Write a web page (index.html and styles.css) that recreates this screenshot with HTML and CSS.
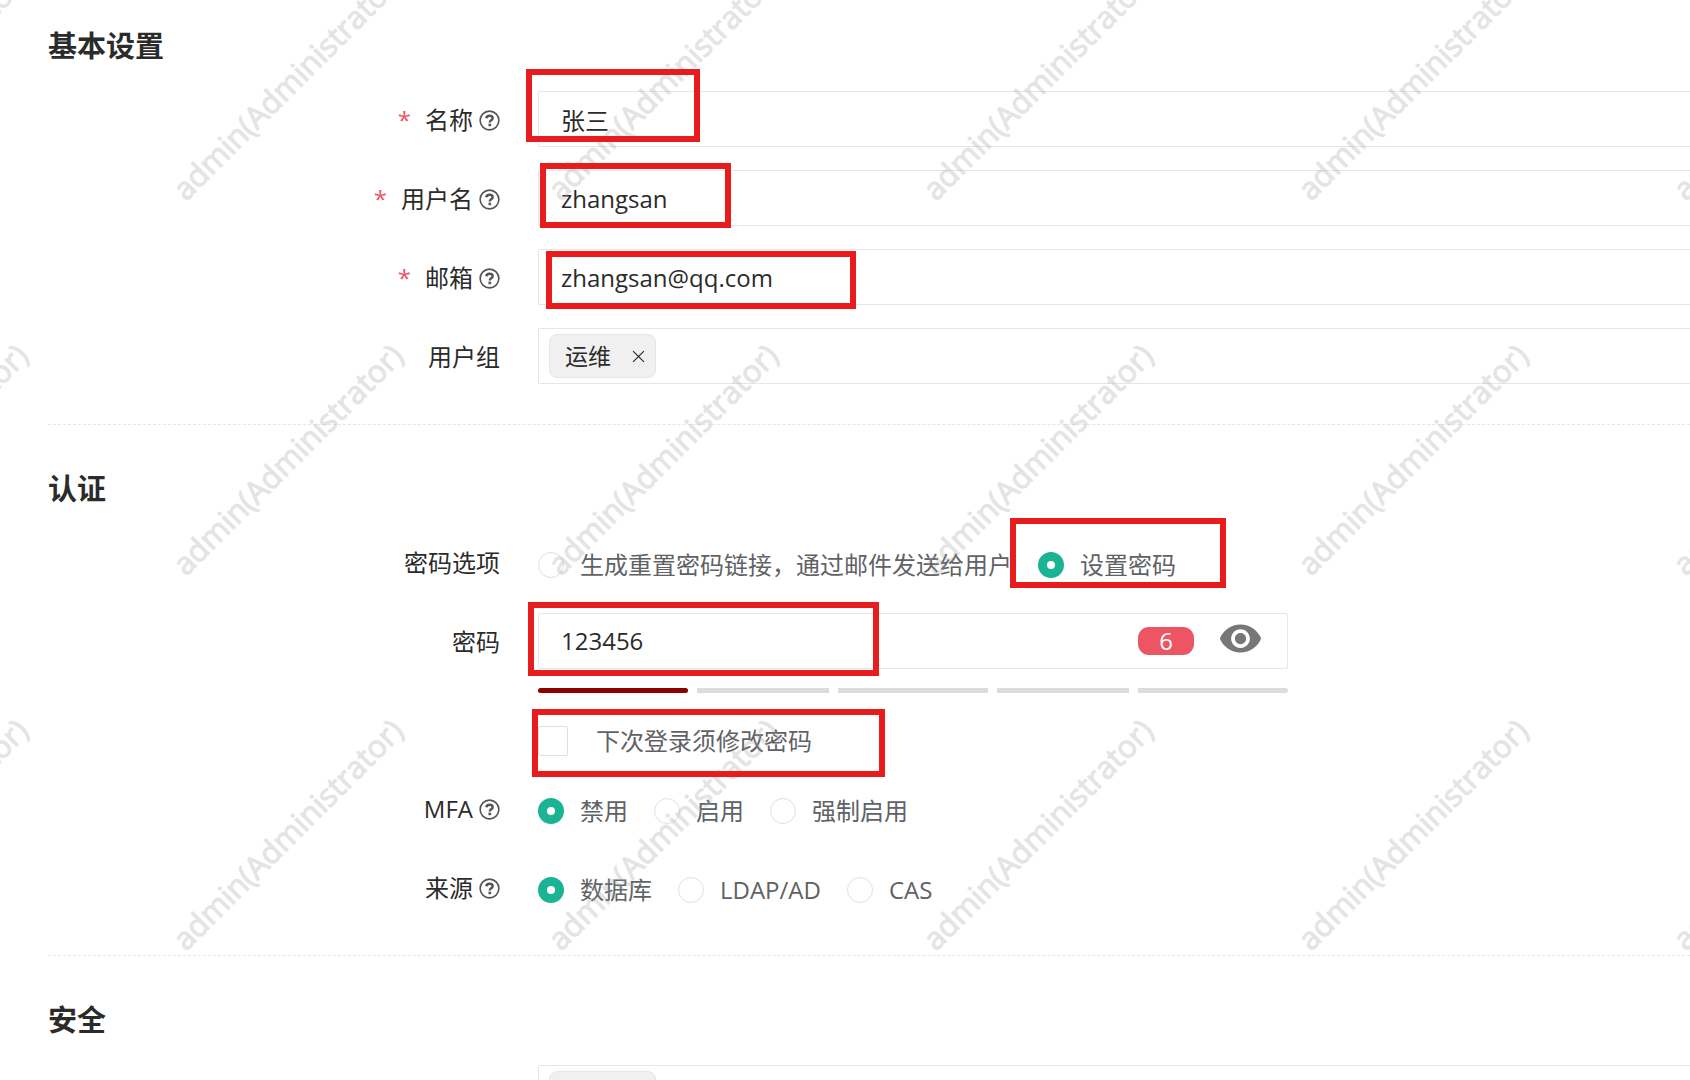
FILE: index.html
```
<!DOCTYPE html>
<html lang="zh-CN">
<head>
  <meta charset="UTF-8">
  <meta name="viewport" content="width=device-width, initial-scale=1">
  <title>基本设置</title>
  <link rel="stylesheet" href="styles.css">
</head>

<body>
  <svg class="sprite" aria-hidden="true">
    <symbol id="icon-help" viewBox="0 0 22 22">
      <circle cx="11" cy="11" r="9.8" fill="none" stroke="currentColor" stroke-width="1.7"/>
      <path d="M7.6 8.7c.3-1.8 1.5-2.7 3.4-2.7 2 0 3.3 1 3.3 2.6 0 2.2-3 2.3-3 4.4" fill="none" stroke="currentColor" stroke-width="2.6"/>
      <rect x="9.9" y="14.3" width="2.8" height="2.7" fill="currentColor"/>
    </symbol>
  </svg>

  <form class="form">
    <section class="section">
      <h3>基本设置</h3>
      <div class="row">
        <label class="name" for="name"><span class="required">*</span>名称<svg class="help"><use href="#icon-help"/></svg></label>
        <input class="control" type="text" id="name" value="张三">
      </div>
      <div class="row">
        <label class="name" for="username"><span class="required">*</span>用户名<svg class="help"><use href="#icon-help"/></svg></label>
        <input class="control" type="text" id="username" value="zhangsan">
      </div>
      <div class="row">
        <label class="name" for="email"><span class="required">*</span>邮箱<svg class="help"><use href="#icon-help"/></svg></label>
        <input class="control" type="text" id="email" value="zhangsan@qq.com">
      </div>
      <div class="row">
        <div class="name">用户组</div>
        <div class="control tags">
          <span class="tag">运维
            <button type="button" class="remove"><svg viewBox="0 0 12 12"><path d="M1 1l10 10M11 1L1 11" fill="none" stroke="currentColor" stroke-width="1.1"/></svg></button>
          </span>
        </div>
      </div>
    </section>

    <section class="section">
      <h3>认证</h3>
      <div class="row">
        <div class="name">密码选项</div>
        <div class="options">
          <label><input type="radio" name="strategy">生成重置密码链接，通过邮件发送给用户</label>
          <label><input type="radio" name="strategy" checked>设置密码</label>
        </div>
      </div>
      <div class="row">
        <label class="name" for="password">密码</label>
        <div class="password">
          <div class="password-box">
            <input type="text" id="password" value="123456">
            <span class="count">6</span>
            <button type="button" class="eye"><svg viewBox="0 0 24 24"><path fill="currentColor" d="M12 4.5C7 4.5 2.73 7.61 1 12c1.73 4.39 6 7.5 11 7.5s9.27-3.11 11-7.5c-1.73-4.39-6-7.5-11-7.5zM12 17c-2.76 0-5-2.24-5-5s2.24-5 5-5 5 2.24 5 5-2.24 5-5 5zm0-8c-1.66 0-3 1.34-3 3s1.34 3 3 3 3-1.34 3-3-1.34-3-3-3z"/></svg></button>
          </div>
          <div class="strength">
            <i class="weak"></i><i></i><i></i><i></i><i></i>
          </div>
          <label class="check"><input type="checkbox">下次登录须修改密码</label>
        </div>
      </div>
      <div class="row">
        <div class="name">MFA<svg class="help"><use href="#icon-help"/></svg></div>
        <div class="options">
          <label><input type="radio" name="mfa" checked>禁用</label>
          <label><input type="radio" name="mfa">启用</label>
          <label><input type="radio" name="mfa">强制启用</label>
        </div>
      </div>
      <div class="row">
        <div class="name">来源<svg class="help"><use href="#icon-help"/></svg></div>
        <div class="options">
          <label><input type="radio" name="source" checked>数据库</label>
          <label><input type="radio" name="source">LDAP/AD</label>
          <label><input type="radio" name="source">CAS</label>
        </div>
      </div>
    </section>

    <section class="section">
      <h3>安全</h3>
      <div class="row">
        <div class="name"></div>
        <div class="control tags"><span class="tag"></span></div>
      </div>
    </section>
  </form>

  <div class="watermark" aria-hidden="true">
    <div class="watermark-grid">
      <span>admin(Administrator)</span><span>admin(Administrator)</span><span>admin(Administrator)</span>
      <span>admin(Administrator)</span><span>admin(Administrator)</span><span>admin(Administrator)</span>
      <span>admin(Administrator)</span><span>admin(Administrator)</span><span>admin(Administrator)</span>
      <span>admin(Administrator)</span><span>admin(Administrator)</span><span>admin(Administrator)</span>
      <span>admin(Administrator)</span><span>admin(Administrator)</span><span>admin(Administrator)</span>
      <span>admin(Administrator)</span><span>admin(Administrator)</span><span>admin(Administrator)</span>
    </div>
  </div>

  <!-- highlight frames over the fields to fill in -->
  <div class="mark mark-name"></div>
  <div class="mark mark-username"></div>
  <div class="mark mark-email"></div>
  <div class="mark mark-strategy"></div>
  <div class="mark mark-password"></div>
  <div class="mark mark-update"></div>
</body>

</html>
```

FILE: styles.css
```
* {
  box-sizing: border-box;
}
body {
  position: relative;
  height: 100vh;
  margin: 0;
  overflow: hidden;
  background: #fff;
  color: #2b2b2b;
  font-family: "Open Sans", "Noto Sans CJK SC", sans-serif;
  font-size: 24px;
  line-height: 32px;
}
input, button {
  margin: 0;
  padding: 0;
  border: 0;
  background: none;
  color: inherit;
  font: inherit;
}
.sprite {
  position: absolute;
  width: 0;
  height: 0;
}
.form {
  padding: 26px 0 0 48px;
}
.section + .section {
  margin-top: 40px;
  padding-top: 44px;
  border-top: 1px dashed #e5e6e7;
}
h3 {
  margin: 0 0 25px;
  font-size: 29px;
  font-weight: bold;
  line-height: 40px;
}
.row {
  display: flex;
  gap: 38px;
}
.row + .row {
  margin-top: 23px;
}
.name {
  display: flex;
  flex: 0 0 452px;
  justify-content: flex-end;
  align-items: center;
  height: 56px;
  padding-top: 2px;
}
.required {
  margin-right: 14px;
  color: #ed5565;
}
.help {
  width: 21px;
  height: 21px;
  margin-left: 6px;
  color: #555;
}
.control {
  flex: 1;
  min-width: 0;
  height: 56px;
  padding: 0 22px;
  border: 1px solid #e5e6e7;
  border-right: 0;
  border-radius: 2px 0 0 2px;
}
.tags {
  display: flex;
  align-items: center;
  padding: 0 10px;
}
.tag {
  display: flex;
  justify-content: space-between;
  align-items: center;
  width: 107px;
  height: 44px;
  padding: 0 10px 0 15px;
  border: 1px solid #e6e6e6;
  border-radius: 8px;
  background: #f0f0f0;
  font-size: 23px;
}
.remove {
  display: flex;
}
.remove svg {
  width: 13px;
  height: 13px;
}

.options {
  display: flex;
  align-items: center;
  gap: 26px;
  height: 56px;
  padding-top: 6px;
  color: #606266;
}
.options label {
  display: flex;
  align-items: center;
  gap: 16px;
}
input[type="radio"] {
  appearance: none;
  width: 26px;
  height: 26px;
  border: 1px solid #dfe0e8;
  border-radius: 50%;
}
input[type="radio"]:checked {
  border: 9px solid #1ab394;
  background: #fff;
}

.password {
  width: 750px;
}
.password-box {
  display: flex;
  align-items: center;
  height: 56px;
  padding: 0 24px 0 22px;
  border: 1px solid #e5e6e7;
  border-radius: 2px;
}
.password-box input {
  flex: 1;
  min-width: 0;
}
.count {
  width: 56px;
  height: 28px;
  border-radius: 11px;
  background: #ed5565;
  color: #fff;
  line-height: 28px;
  text-align: center;
}
.eye {
  display: flex;
  margin: 0 0 5px 24px;
  color: #777;
}
.eye svg {
  width: 45px;
  height: 45px;
}
.strength {
  display: grid;
  grid-template-columns: 150fr 132fr 150fr 132fr 150fr;
  gap: 9px;
  margin-top: 19px;
}
.strength i {
  height: 5px;
  background: #dcdcdc;
}
.strength i:last-child {
  border-radius: 0 3px 3px 0;
}
.strength .weak {
  border-radius: 3px;
  background: #8b0000;
}
.check {
  display: flex;
  align-items: center;
  gap: 28px;
  margin-top: 32px;
  height: 32px;
  color: #606266;
}
input[type="checkbox"] {
  appearance: none;
  width: 30px;
  height: 30px;
  border: 1px solid #dcdfe6;
  border-radius: 2px;
}

.watermark {
  position: absolute;
  inset: 0;
  overflow: hidden;
  color: #a0a0a0;
  font-size: 31px;
  -webkit-text-stroke: 1px #a0a0a0;
  opacity: 0.28;
  pointer-events: none;
}
.watermark-grid {
  display: grid;
  grid-template-columns: repeat(6, 375px);
  grid-auto-rows: 375px;
  place-items: center;
  margin: -104px 0 0 -275px;
}
.watermark span {
  white-space: nowrap;
  transform: rotate(-45deg);
}

.mark {
  position: absolute;
  border: 6px solid #e81c1c;
  pointer-events: none;
}
.mark-name {
  top: 69px;
  left: 526px;
  width: 174px;
  height: 73px;
}
.mark-username {
  top: 163px;
  left: 540px;
  width: 191px;
  height: 65px;
}
.mark-email {
  top: 251px;
  left: 546px;
  width: 310px;
  height: 58px;
}
.mark-strategy {
  top: 518px;
  left: 1010px;
  width: 216px;
  height: 70px;
}
.mark-password {
  top: 602px;
  left: 528px;
  width: 351px;
  height: 74px;
}
.mark-update {
  top: 709px;
  left: 532px;
  width: 353px;
  height: 68px;
}
```
